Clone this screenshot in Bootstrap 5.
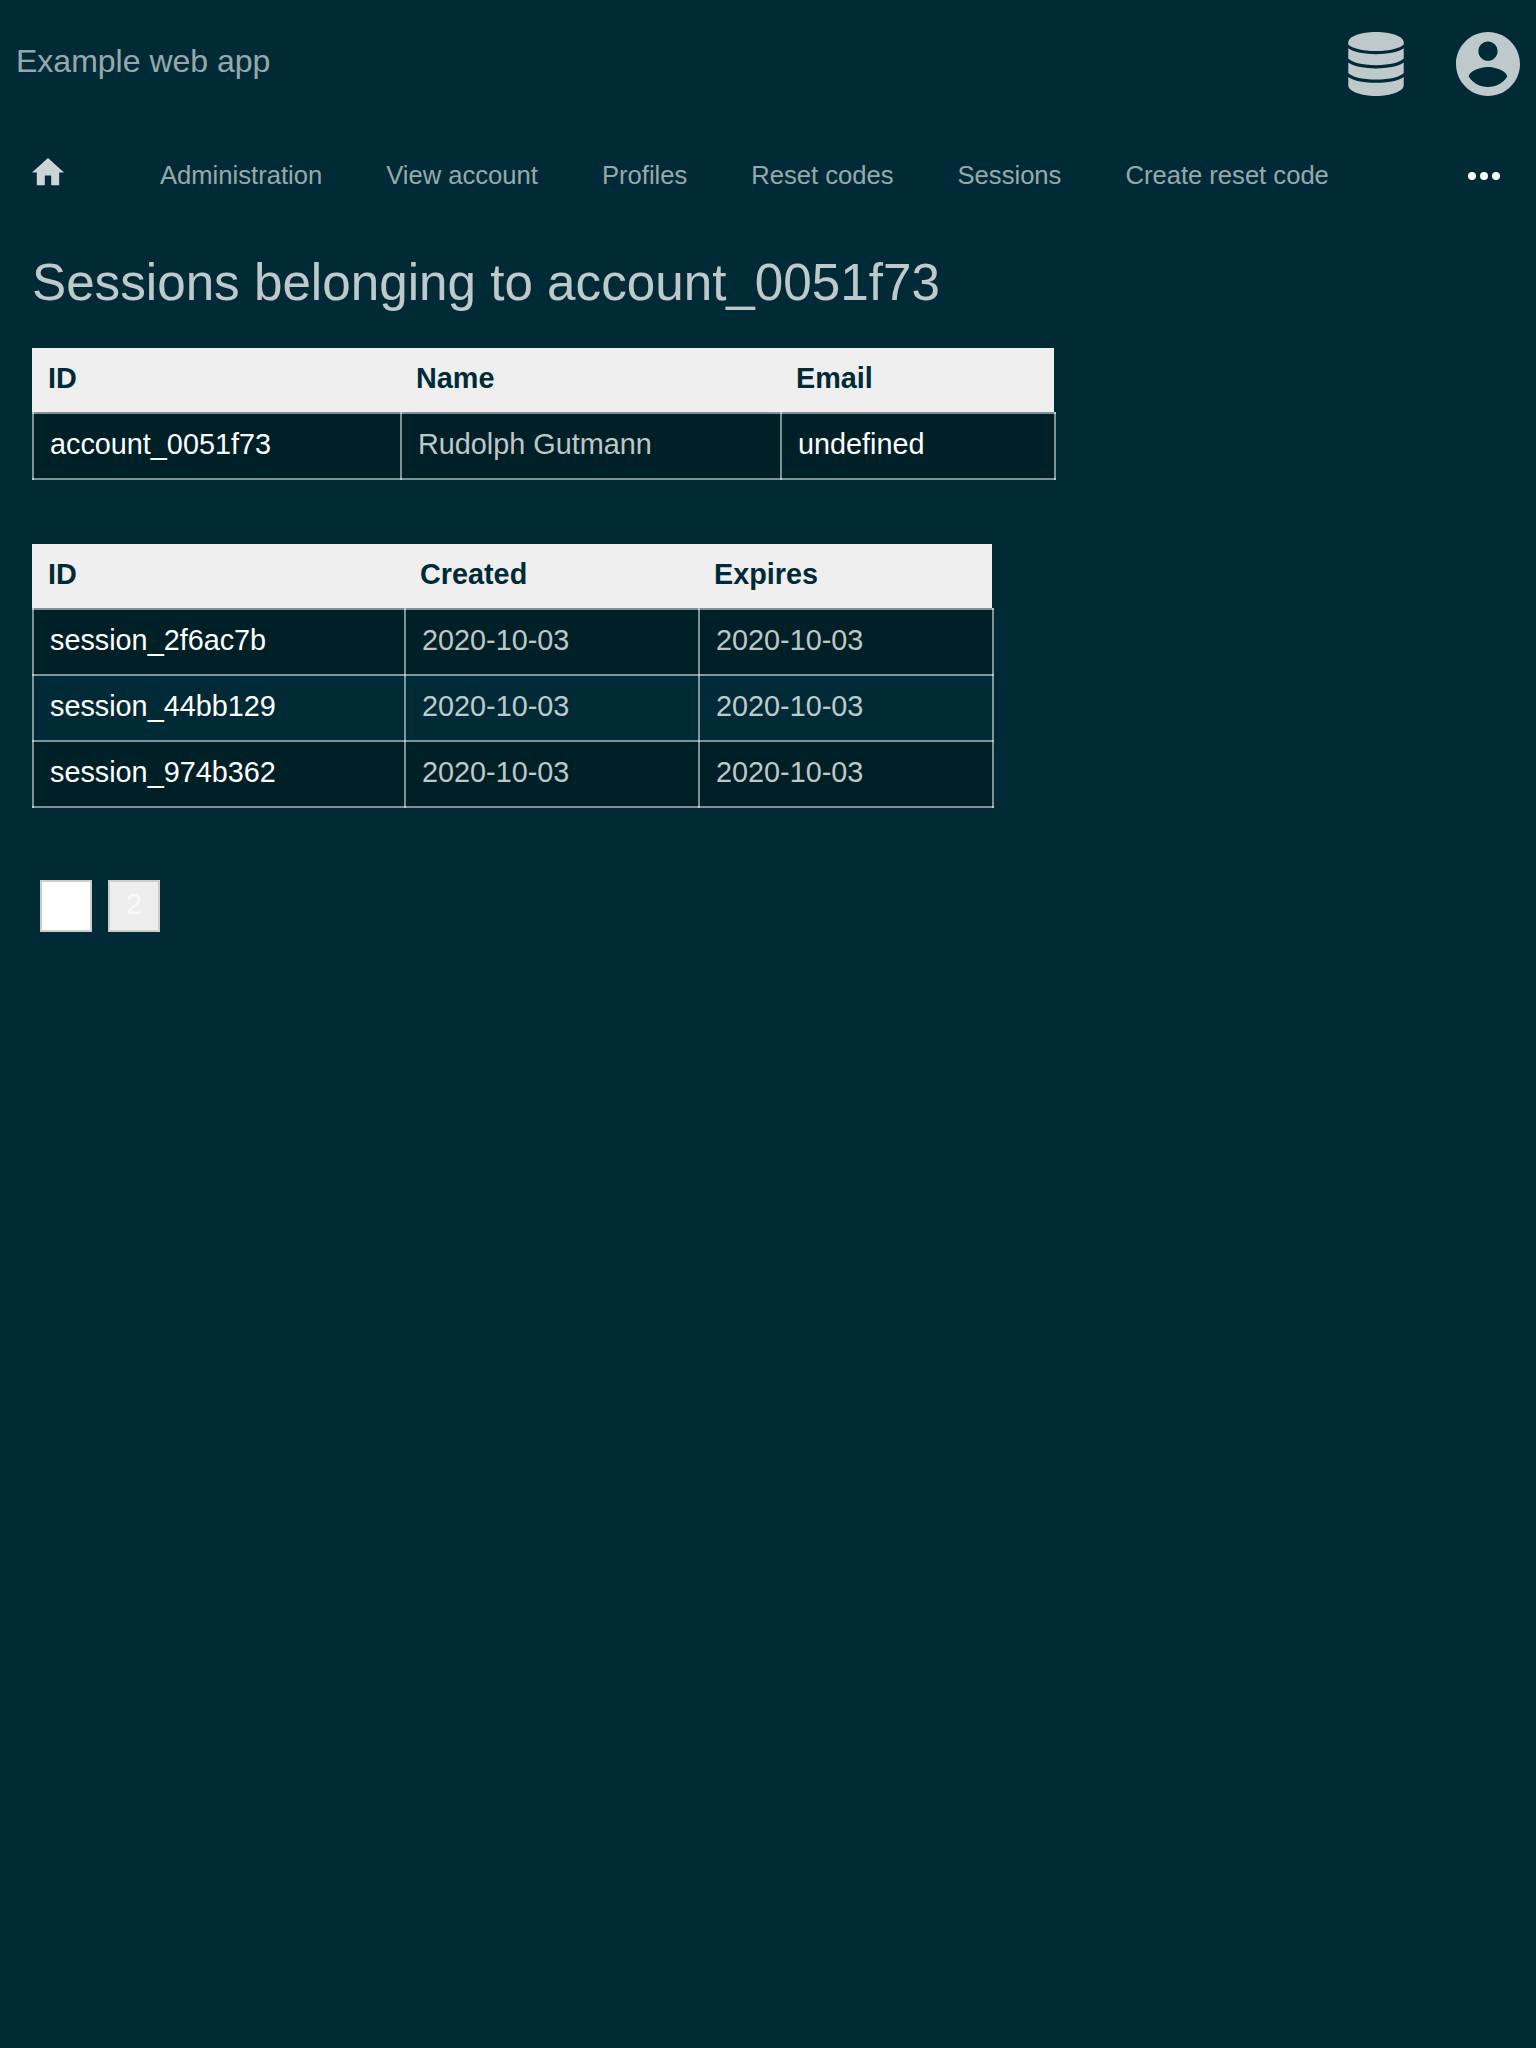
<!DOCTYPE html>
<html lang="en">
<head>
<meta charset="utf-8">
<meta name="viewport" content="width=device-width, initial-scale=1">
<title>Example web app</title>
<link href="https://cdn.jsdelivr.net/npm/bootstrap@5.3.0/dist/css/bootstrap.min.css" rel="stylesheet">
<style>
body{background:#002b36;color:rgba(255,255,255,.75);font-family:"Liberation Sans",Arial,sans-serif;font-size:28.8px;line-height:32px}
a{color:#fff;text-decoration:none}
svg{display:block;fill:currentColor}
.topbar{height:128px;padding:32px 16px 0}
.topbar .navbar-brand{font-size:32px;line-height:36px;margin:0;padding:11px 0 0;color:rgba(255,255,255,.6)}
.topbar .tools{gap:52px}
.topbar .tools a{color:rgba(255,255,255,.75)}
.menubar{height:96px;padding:30px 36px 0 32px}
.menubar .home{color:rgba(255,255,255,.8);padding:.4px 0 0;margin-right:64px}
.menubar .nav-link{font-size:25.6px;line-height:32px;padding:1px 32px 0;color:rgba(255,255,255,.6);white-space:nowrap}
.menubar .more{color:#fff;padding-top:14px}
.page{padding:29px 32px}
.page h1{font-size:51.2px;line-height:60px;font-weight:400;margin:0 0 35px}
.datagrid{--line:rgba(255,255,255,.5);border-collapse:separate;border-spacing:0;table-layout:fixed;margin-bottom:64px}
.datagrid th{background:#efefef;color:#002b36;height:64px;padding:14px 16px 18px;font-weight:700}
.datagrid th:last-child{border-right:2px solid transparent;background-clip:padding-box}
.datagrid td{height:66px;padding:16px 16px 18px 18px;
  background-image:linear-gradient(var(--line),var(--line)),linear-gradient(var(--line),var(--line)),linear-gradient(var(--line),var(--line)),linear-gradient(var(--line),var(--line));
  background-size:2px 100%,100% 2px,0 0,0 0;
  background-position:left top,left top,right top,left bottom;background-repeat:no-repeat}
.datagrid tbody tr:nth-child(odd) td{background-color:#002028}
.datagrid td:last-child{background-size:2px 100%,100% 2px,2px 100%,0 0}
.datagrid tr:last-child td{height:68px;padding-bottom:20px;background-size:2px 100%,100% 2px,0 0,100% 2px}
.datagrid tr:last-child td:last-child{background-size:2px 100%,100% 2px,2px 100%,100% 2px}
.accounts{width:1024px}
.sessions{width:962px}
.pager{gap:16px;padding:8px 8px 0}
.pager .page-link{width:52px;height:52px;border:2px solid #ccc;border-radius:0;background:#eee;color:#fafafa;font-size:28.8px;line-height:32px;padding:6px 0 0;text-align:center}
.pager .active .page-link{background:#fff;color:#fff;border-color:#ccc}
</style>
</head>
<body>
<header class="topbar d-flex justify-content-between align-items-start">
  <a class="navbar-brand" href="#">Example web app</a>
  <div class="tools d-flex">
    <a href="#" aria-label="Administration"><svg width="56" height="64" viewBox="-.3 0 56.6 64" preserveAspectRatio="none"><path d="M28 0C43.5 0 56 4.6 56 10.2v2C53 16 42 19 28 19S3 16 0 12.2v-2C0 4.6 12.5 0 28 0z"/><path d="M0 16.3C6 20.4 16.5 22.2 28 22.2S50 20.4 56 16.3V26.6C53 30.3 42 33.2 28 33.2S3 30.3 0 26.6z"/><path d="M0 30.6C6 34.7 16.5 36.5 28 36.5S50 34.7 56 30.6V40.9C53 44.6 42 47.5 28 47.5S3 44.6 0 40.9z"/><path d="M0 44.9C6 49 16.5 50.8 28 50.8S50 49 56 44.9V53.3C56 59.2 43.5 64 28 64S0 59.2 0 53.3z"/></svg></a>
    <a href="#" aria-label="Account"><svg width="64" height="64" viewBox="2 2 20 20"><path d="M12 2C6.48 2 2 6.48 2 12s4.48 10 10 10 10-4.48 10-10S17.52 2 12 2zm0 3c1.66 0 3 1.34 3 3s-1.34 3-3 3-3-1.34-3-3 1.34-3 3-3zm0 14.2c-2.5 0-4.71-1.28-6-3.22.03-1.99 4-3.08 6-3.08 1.99 0 5.97 1.09 6 3.08-1.29 1.94-3.5 3.22-6 3.22z"/></svg></a>
  </div>
</header>
<nav class="menubar d-flex align-items-start">
  <a class="home" href="#" aria-label="Home"><svg width="32" height="27.2" viewBox="2 3 20 17"><path d="M10 20v-6h4v6h5v-8h3L12 3 2 12h3v8z"/></svg></a>
  <div class="nav flex-nowrap">
    <a class="nav-link" href="#">Administration</a>
    <a class="nav-link" href="#">View account</a>
    <a class="nav-link" href="#">Profiles</a>
    <a class="nav-link" href="#">Reset codes</a>
    <a class="nav-link" href="#">Sessions</a>
    <a class="nav-link" href="#">Create reset code</a>
  </div>
  <a class="more ms-auto" href="#" aria-label="More"><svg width="32" height="8" viewBox="0 0 32 8"><circle cx="4" cy="4" r="4"/><circle cx="16" cy="4" r="4"/><circle cx="28" cy="4" r="4"/></svg></a>
</nav>
<main class="page">
  <h1>Sessions belonging to account_0051f73</h1>
  <table class="datagrid accounts">
    <colgroup><col width="368"><col width="380"><col width="276"></colgroup>
    <thead><tr><th>ID</th><th>Name</th><th>Email</th></tr></thead>
    <tbody><tr><td><a href="#">account_0051f73</a></td><td>Rudolph Gutmann</td><td><a href="#">undefined</a></td></tr></tbody>
  </table>
  <table class="datagrid sessions">
    <colgroup><col width="372"><col width="294"><col width="296"></colgroup>
    <thead><tr><th>ID</th><th>Created</th><th>Expires</th></tr></thead>
    <tbody>
      <tr><td><a href="#">session_2f6ac7b</a></td><td>2020-10-03</td><td>2020-10-03</td></tr>
      <tr><td><a href="#">session_44bb129</a></td><td>2020-10-03</td><td>2020-10-03</td></tr>
      <tr><td><a href="#">session_974b362</a></td><td>2020-10-03</td><td>2020-10-03</td></tr>
    </tbody>
  </table>
  <ul class="pager list-unstyled d-flex mb-0">
    <li class="active"><a class="page-link" href="#">1</a></li>
    <li><a class="page-link" href="#">2</a></li>
  </ul>
</main>
<script src="https://cdn.jsdelivr.net/npm/bootstrap@5.3.0/dist/js/bootstrap.bundle.min.js"></script>
</body>
</html>
